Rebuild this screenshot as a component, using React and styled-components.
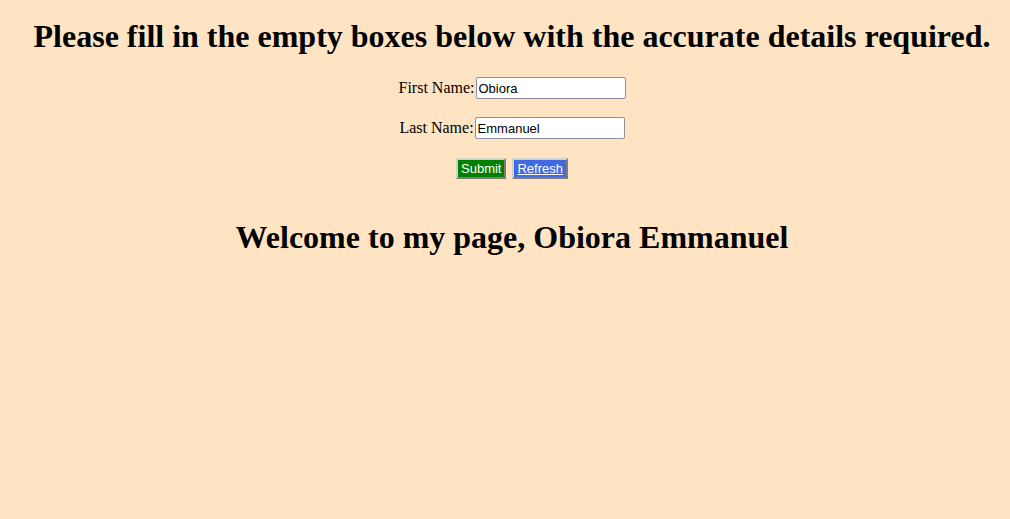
import React, { useState } from "react";
import styled, { createGlobalStyle } from "styled-components";

const GlobalStyle = createGlobalStyle`
  html, body {
    margin: 0;
    padding: 0;
    background: #ffe4c4;
  }

  body {
    font-family: "Liberation Serif", "Times New Roman", serif;
    color: #000;
  }
`;

function App() {
  const [firstName, setFirstName] = useState("Obiora");
  const [lastName, setLastName] = useState("Emmanuel");
  const [greeting, setGreeting] = useState("Obiora Emmanuel");

  function onSubmit(e) {
    e.preventDefault();
    setGreeting(`${firstName} ${lastName}`);
  }

  function onRefresh() {
    setFirstName("");
    setLastName("");
    setGreeting("");
  }

  return (
    <StyledPage>
      <GlobalStyle />
      <Heading>Please fill in the empty boxes below with the accurate details required.</Heading>
      <Form onSubmit={onSubmit}>
        <Row>
          <Label htmlFor="first">First Name:</Label>
          <Input
            id="first"
            type="text"
            value={firstName}
            onChange={e => setFirstName(e.target.value)}
          />
        </Row>
        <Row>
          <Label htmlFor="last">Last Name:</Label>
          <Input
            id="last"
            type="text"
            value={lastName}
            onChange={e => setLastName(e.target.value)}
          />
        </Row>
        <Buttons>
          <Button type="submit" bg="#008000">Submit</Button>
          <Button type="button" bg="#4169e1" underline onClick={onRefresh}>
            Refresh
          </Button>
        </Buttons>
      </Form>
      <Welcome>Welcome to my page, {greeting}</Welcome>
    </StyledPage>
  );
}

const StyledPage = styled.div`
  display: flex;
  flex-direction: column;
  align-items: center;
  padding-left: 14px;
  min-height: 519px;
  box-sizing: border-box;
`;

const Heading = styled.h1`
  margin: 18px 0 0;
  font-size: 32px;
  font-weight: bold;
  text-align: center;
`;

const Welcome = styled(Heading)`
  margin-top: 40px;
`;

const Form = styled.form`
  display: flex;
  flex-direction: column;
  align-items: center;
  gap: 18px;
  margin-top: 22px;
`;

const Row = styled.div`
  display: flex;
  align-items: baseline;
  font-size: 16px;
`;

const Label = styled.label`
  margin-right: 1px;
`;

const Input = styled.input`
  width: 150px;
  height: 22px;
  box-sizing: border-box;
  padding: 1px 2px;
  border: 1px solid #8f8f9d;
  border-radius: 2px;
  background: #fff;
  font-family: "Liberation Sans", Arial, sans-serif;
  font-size: 13px;
  color: #000;
`;

const Buttons = styled.div`
  display: flex;
  gap: 6px;
  margin-top: 1px;
`;

const Button = styled.button`
  height: 21px;
  box-sizing: border-box;
  padding: 0 3px;
  border: 2px outset #d4d0c8;
  border-radius: 0;
  background: ${p => p.bg};
  color: #fff;
  font-family: "Liberation Sans", Arial, sans-serif;
  font-size: 13px;
  text-decoration: ${p => (p.underline ? "underline" : "none")};
  cursor: pointer;
`;

export default App;
